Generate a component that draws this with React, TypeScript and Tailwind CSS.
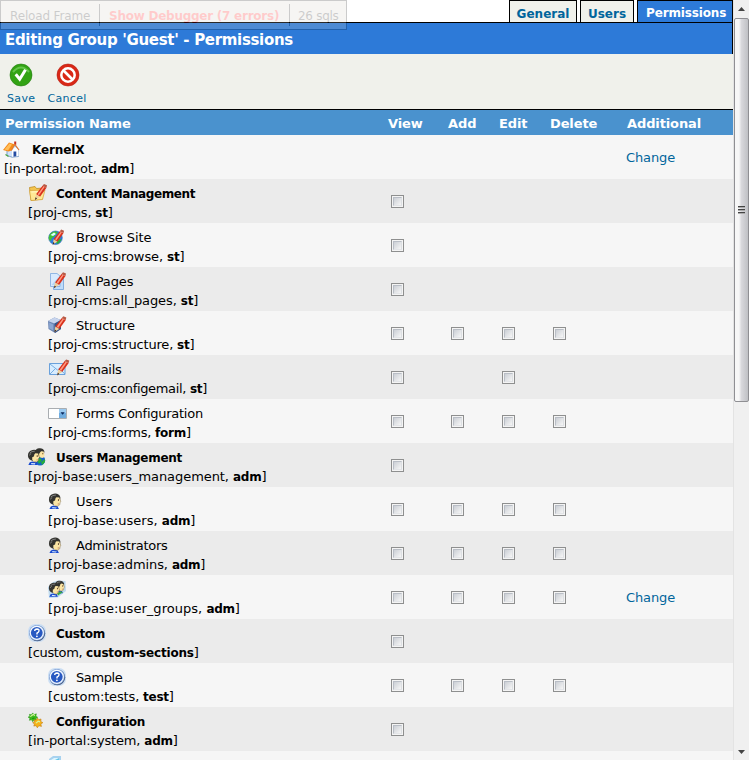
import type { ReactNode } from 'react';

type IconName =
  | 'home' | 'folder' | 'browse' | 'pages' | 'structure' | 'email' | 'form'
  | 'usersGlobe' | 'user' | 'group' | 'help' | 'gears' | 'settings';

function Pencil() {
  return (
    <g>
      <path d="M8 11 14.5 2.5 18.5 4.5 12 13.5Z" fill="#d9311c" />
      <path d="M9.6 11 15.6 3 16.8 3.6 10.8 12.4Z" fill="#ff9a80" />
      <path d="M14.5 2.5 16 .8 19 2 18.5 4.5Z" fill="#b85a45" />
      <path d="M8 11 12 13.5 7.2 16.5Z" fill="#efd09a" />
      <path d="M7.6 14 9 15.3 7 16.8Z" fill="#33211a" />
    </g>
  );
}

function Person() {
  return (
    <g>
      <path d="M1.5 17.5 3 14.8 6 13.8 10 14.5 11.5 17.5Z" fill="#1749d0" />
      <path d="M4.5 15.4 8 15.8 9 15 8.5 17 4.5 16.8Z" fill="#d8ecff" />
      <path d="M1 8Q.8 2.3 6 1.4 11.5.6 13 5L12.6 8 6.5 13.2Q1.4 12.4 1 8Z" fill="#33332f" />
      <path d="M5.6 9.4 7.4 8.4 8 6 9 5 12 5.4 12.6 7.6 13.2 9.8 12.4 10.4 12.2 12.8 10.2 14.4 7 14 5.6 12Z" fill="#fbe5a4" />
      <path d="M12.4 5.5 13 8 13.5 9.8 12.7 10.5 12.4 13 10.3 14.5 7 14.2" stroke="#7a6230" strokeWidth=".5" fill="none" />
      <path d="M3 4.8Q4.8 2.8 8.3 2.8M2.6 7.4Q3.1 5.8 4.5 5.2" stroke="#8f8f8f" strokeWidth=".9" fill="none" />
      <path d="M11 7.2v1.7" stroke="#4a2c1c" strokeWidth="1" />
      <path d="M10.2 12.2h1.5" stroke="#b5583c" strokeWidth=".7" />
    </g>
  );
}

function Icon({ name }: { name: IconName }) {
  const art: Record<IconName, ReactNode> = {
    home: (
      <g transform="translate(-1 0)">
        <path d="M4 9.5 10 4.5 15.5 9.5V16.5L9 17.2 4 15.5Z" fill="#cfe2fa" stroke="#6a90be" strokeWidth=".8" />
        <path d="M9 10 12.5 7 15.6 10V16L9 16.8Z" fill="#fff" />
        <path d="M10.5 11.5h2.8V16.3l-2.8.4Z" fill="#264da1" />
        <path d="M0 10 6 2.5 12 4.5 8.5 10.5 5.5 11.5Z" fill="#f58a18" />
        <path d="M1.5 9.5 6.5 3.6 9 4.5 5 10.5Z" fill="#ffbd59" />
        <path d="M8.3 10.5 11.8 4.3 16 10" stroke="#e27a33" strokeWidth="1.2" fill="none" />
        <path d="M11.2 1.5h2v3.5l-2-1.2Z" fill="#c7321c" />
        <path d="m2.5 14.5 3 2" stroke="#46a33b" strokeWidth="1.2" />
      </g>
    ),
    folder: (
      <g>
        <path d="M1.5 3.5 7 2.5 8.5 4.5 14.5 4V15L3 16.5Z" fill="#f5c64f" stroke="#b88216" strokeWidth=".7" />
        <path d="M1.5 6.5 17 6 14.5 15.5 3 16.5Z" fill="#ffe994" stroke="#d3a03a" strokeWidth=".7" />
        <path d="M3.5 8 13 7.6" stroke="#fff9cb" />
        <g transform="translate(0 -.8)"><Pencil /></g>
      </g>
    ),
    browse: (
      <g>
        <circle cx="7.5" cy="9.8" r="6.8" fill="#2b7bdd" stroke="#346bad" strokeWidth=".6" />
        <path d="M1 8Q3 3.5 8 3.2L10 5 7.8 6.3 7 8 4 10 2.5 13Q0 12 1 8Z" fill="#42bf36" />
        <path d="M9 12 12 11 13.5 12 10 16 8 15Z" fill="#2aaf39" />
        <path d="M2.5 7 6 4.5 8 6 5 8Z" fill="#dbffff" />
        <g transform="translate(-2 .8) scale(.95)"><Pencil /></g>
      </g>
    ),
    pages: (
      <g>
        <path d="M5.5 5.5h10v12h-10Z" fill="#bfdcfa" stroke="#6ea0d8" strokeWidth=".8" />
        <path d="M2.5 1.5H9L12 4v10.5H2.5Z" fill="#d8eafe" stroke="#7caae0" strokeWidth=".8" />
        <path d="m3.5 13 7-8v8Z" fill="#b5d5f6" />
        <g transform="translate(-1 -.5)"><Pencil /></g>
      </g>
    ),
    structure: (
      <g>
        <path d="M0 5 6.5 1.5 13 4V13L7 17 .5 13Z" fill="#6d87b4" />
        <path d="M0 5 6.5 1.5 13 4 6.5 7.5Z" fill="#c7d4ed" />
        <path d="M6.5 7.5 13 4V13L7 17Z" fill="#395487" />
        <path d="m1.2 6.5 4 2v6l-4-2.2Z" fill="#8ba7d3" />
        <g transform="translate(-.7 -.5)"><Pencil /></g>
      </g>
    ),
    email: (
      <g>
        <path d="M1.5 3.5h15.5v11H1.5Z" fill="#d8edff" stroke="#5c99d8" strokeWidth=".9" />
        <path d="m2 4 7.5 6L17 4M2 14l5.5-5.5M17 14l-5.5-5" stroke="#77aee1" fill="none" />
        <g transform="translate(2.2 -1.4)"><Pencil /></g>
      </g>
    ),
    form: (
      <g>
        <path d="M.5 4.5h18v10H.5Z" fill="#fff" stroke="#a9adb1" />
        <path d="M11 5h7v9h-7Z" fill="#70acdf" />
        <path d="M11 5h7v4h-7Z" fill="#9bcaf0" />
        <path d="m12.5 8.2h4.2L14.6 10.8Z" fill="#08275d" />
      </g>
    ),
    usersGlobe: (
      <g>
        <circle cx="12" cy="12.2" r="5.2" fill="#1462c7" />
        <path d="M9 12 12 10 14 12 11 16ZM13 14 17 11V14L14 17Z" fill="#25ad3d" />
        <g transform="translate(6 -.8) scale(.8)">
          <path d="M1 8Q.8 2.3 6 1.4 11.5.6 13 5L12.6 8 6.5 13.2Q1.4 12.4 1 8Z" fill="#33332f" />
          <path d="M5.6 9.4 8 6 9 5 12 5.4 13.2 9.8 12.2 12.8 10.2 13.6 5.6 12Z" fill="#fbe5a4" />
          <path d="M11 7.2v1.7" stroke="#4a2c1c" />
        </g>
        <g transform="translate(-1 .6) scale(.93)"><Person /></g>
      </g>
    ),
    user: <g transform="translate(0 .4) scale(.95)"><Person /></g>,
    group: (
      <g>
        <path d="M0 7 5 2 10 .5 17.5 1 18 11 10 17.5 1 18Z" fill="#c0dbef" />
        <g transform="translate(6 -.3) scale(.78)"><Person /></g>
        <path d="M9 13 12 11.5 15 12 10 15.5Z" fill="#38ad44" />
        <g transform="translate(0 1.6) scale(.86)"><Person /></g>
      </g>
    ),
    help: (
      <g>
        <rect x="0" y="0" width="18" height="18" rx="7" fill="#cbdef3" />
        <circle cx="9.3" cy="9.3" r="7.9" fill="#44597e" />
        <circle cx="8.8" cy="8.8" r="7.7" fill="#8eade0" />
        <circle cx="8.8" cy="8.8" r="7.1" fill="#f7fbff" />
        <circle cx="8.8" cy="8.8" r="5.9" fill="#2859c2" />
        <path d="M6.7 7Q6.8 5 9 5 11.2 5.1 11 7 10.8 8.2 9 9.2V10.4" fill="none" stroke="#fff" strokeWidth="1.4" />
        <circle cx="8.9" cy="12.3" r=".9" fill="#fff" />
      </g>
    ),
    gears: (
      <g transform="translate(0 -.5) scale(.93)">
        <path d="M0 6 2 5.5 1.5 3 3.8 3.5 5 1.5 6.5 3.3 9 2.5 8.5 5 10.5 6.2 8.6 7.5 9 10 6.5 9.2 5 11 4 9 1.5 9.5 2 7.2Z" fill="#3bbb1b" stroke="#239211" strokeWidth=".5" />
        <path d="M5 12 7 11.3 6.5 9 9 9.2 10 7 11.7 8.8 14 8 13.8 10.8 16 12 13.8 13.5 14.5 16 11.7 15.3 10 17.5 8.7 15.2 6.2 15.7 7 13.5Z" fill="#f5b31a" stroke="#c27a0c" strokeWidth=".6" />
        <path d="m2.5 5.5 3-2.2 2 1M8.5 12.5l2.5-2 2 .7" stroke="#d8f79e" strokeWidth="1.3" fill="none" />
        <path d="M4.5 7.5 7 7" stroke="#168a0d" strokeWidth="1.2" />
      </g>
    ),
    settings: (
      <g>
        <path d="M1 3 5 0h8v17H1Z" fill="#a8d2ef" />
        <path d="m3 4 3-2h5v11H3Z" fill="#dff6ff" />
        <path d="m5 5 6-3v10H5Z" fill="#65c5e8" />
      </g>
    ),
  };
  return (
    <svg viewBox="0 0 22 18" className="h-[18px] w-[22px] shrink-0 overflow-visible">
      {art[name]}
    </svg>
  );
}

interface Permission {
  level: 0 | 1 | 2;
  icon: IconName;
  name: string;
  path: string;
  module: string;
  boxes: string;
  change?: boolean;
  nameClass?: string;
  pathClass?: string;
}

const permissions: Permission[] = [
  { level: 0, icon: 'home', name: 'KernelX', path: 'in-portal:root', module: 'adm', boxes: '', change: true, nameClass: 'tracking-[-0.1px]', pathClass: 'tracking-[-0.1px]' },
  { level: 1, icon: 'folder', name: 'Content Management', path: 'proj-cms', module: 'st', boxes: 'v', nameClass: 'tracking-[-0.4px]', pathClass: 'tracking-[-0.2px]' },
  { level: 2, icon: 'browse', name: 'Browse Site', path: 'proj-cms:browse', module: 'st', boxes: 'v', nameClass: 'tracking-[-0.1px]', pathClass: 'tracking-[-0.08px]' },
  { level: 2, icon: 'pages', name: 'All Pages', path: 'proj-cms:all_pages', module: 'st', boxes: 'v', nameClass: 'tracking-[-0.13px]', pathClass: 'tracking-[-0.1px]' },
  { level: 2, icon: 'structure', name: 'Structure', path: 'proj-cms:structure', module: 'st', boxes: 'vaed', nameClass: 'tracking-[-0.2px]', pathClass: 'tracking-[-0.18px]' },
  { level: 2, icon: 'email', name: 'E-mails', path: 'proj-cms:configemail', module: 'st', boxes: 've', nameClass: 'tracking-[-0.3px]', pathClass: 'tracking-[-0.33px]' },
  { level: 2, icon: 'form', name: 'Forms Configuration', path: 'proj-cms:forms', module: 'form', boxes: 'vaed', nameClass: 'tracking-[-0.26px]', pathClass: 'tracking-[-0.23px]' },
  { level: 1, icon: 'usersGlobe', name: 'Users Management', path: 'proj-base:users_management', module: 'adm', boxes: 'v', nameClass: 'tracking-[-0.29px]', pathClass: 'tracking-[-0.07px]' },
  { level: 2, icon: 'user', name: 'Users', path: 'proj-base:users', module: 'adm', boxes: 'vaed', pathClass: 'tracking-[0.02px]' },
  { level: 2, icon: 'user', name: 'Administrators', path: 'proj-base:admins', module: 'adm', boxes: 'vaed', nameClass: 'tracking-[-0.28px]', pathClass: 'tracking-[-0.1px]' },
  { level: 2, icon: 'group', name: 'Groups', path: 'proj-base:user_groups', module: 'adm', boxes: 'vaed', change: true, nameClass: 'tracking-[-0.15px]', pathClass: 'tracking-[0.03px]' },
  { level: 1, icon: 'help', name: 'Custom', path: 'custom', module: 'custom-sections', boxes: 'v', nameClass: 'tracking-[-0.35px]', pathClass: 'tracking-[-0.35px]' },
  { level: 2, icon: 'help', name: 'Sample', path: 'custom:tests', module: 'test', boxes: 'vaed', nameClass: 'tracking-[-0.4px]', pathClass: 'tracking-[-0.15px]' },
  { level: 1, icon: 'gears', name: 'Configuration', path: 'in-portal:system', module: 'adm', boxes: 'v', nameClass: 'tracking-[-0.28px]', pathClass: 'tracking-[-0.17px]' },
  { level: 2, icon: 'settings', name: '', path: '', module: '', boxes: '' },
];

const indents = ['pl-[4px]', 'pl-[28px]', 'pl-[48px]'];
const columns = 'grid grid-cols-[388px_60px_51px_51px_76px_1fr]';

function CheckBox() {
  return (
    <span className="ml-[3px] flex size-[13px] items-center justify-center border border-[#8e8f8f] bg-[#f4f4f4]">
      <span className="size-[9px] border border-[#b9bec6] border-r-[#dde0e3] border-b-[#e3e5e8] bg-linear-to-br from-[#cbcfd5] to-[#f6f6f6]" />
    </span>
  );
}

function PermissionRow({ item }: { item: Permission }) {
  const heading = item.level < 2;
  return (
    <div className={`${columns} h-11 shrink-0 odd:bg-[#f6f6f6] even:bg-[#ebebeb]`}>
      <div className={`pt-[5px] leading-[19px] whitespace-nowrap ${indents[item.level]}`}>
        <div className={`flex h-[19px] gap-[6px] ${heading ? 'text-[12px] leading-[21px] font-bold' : ''}`}>
          <Icon name={item.icon} />
          <span className={item.nameClass}>{item.name}</span>
        </div>
        {item.path && (
          <div className="h-[19px]">
            <span className={item.pathClass}>[{item.path}, </span>
            <b className={`text-[12px] ${item.module.length > 4 ? 'tracking-[-0.18px]' : 'tracking-[-0.25px]'}`}>{item.module}</b>]
          </div>
        )}
      </div>
      {['v', 'a', 'e', 'd'].map((key) => (
        <div key={key} className="flex items-center pt-px">{item.boxes.includes(key) && <CheckBox />}</div>
      ))}
      <div className="flex items-center pt-[2px] tracking-[-0.1px] text-[#00659c]">{item.change && 'Change'}</div>
    </div>
  );
}

function Scrollbar() {
  return (
    <aside className="flex h-full w-4 flex-col items-center border-l border-[#e3e3e3] bg-[#f0f0f0]">
      <div className="flex h-[18px] items-center"><svg className="h-1 w-[7px]" viewBox="0 0 7 4"><path d="M0 4 3.5 0 7 4Z" fill="#444" /></svg></div>
      <div className="flex h-[384px] w-[15px] flex-col items-center justify-center gap-px rounded-[2px] border border-[#8f8f93] bg-linear-to-r from-[#f7f7f7] from-30% via-[#d8d8dc] to-[#bfc0c4]">
        {[0, 1, 2].map((n) => <i key={n} className="h-[2px] w-[7px] border-t border-[#444] bg-[#aaa]" />)}
      </div>
      <div className="mt-auto flex h-4 items-center"><svg className="h-1 w-[7px]" viewBox="0 0 7 4"><path d="M0 0h7L3.5 4Z" fill="#444" /></svg></div>
    </aside>
  );
}

export default function App() {
  return (
    <div className="relative flex h-[760px] w-[749px] overflow-hidden bg-white font-[Verdana,'DejaVu_Sans',sans-serif] text-[13px] text-black">
      <main className="flex h-full w-[733px] flex-col overflow-hidden">
        <nav className="flex h-[23px] shrink-0 justify-end gap-[3px] border-b border-black text-[12px] leading-[26px] font-bold text-[#00659c]">
          <span className="w-[68px] border border-b-0 border-black bg-[#f0f1eb] text-center">General</span>
          <span className="w-[54px] border border-b-0 border-black bg-[#f0f1eb] text-center">Users</span>
          <span className="w-24 border border-b-0 border-black bg-[#2d7ad8] pl-[8px] leading-[24px] tracking-[-0.15px] text-white">Permissions</span>
        </nav>
        <h1 className="h-[31px] shrink-0 border-r border-black bg-[#2d7ad8] pl-[5px] text-[15px] leading-[35px] font-bold tracking-[-0.32px] text-white">Editing Group 'Guest' - Permissions</h1>
        <section className="flex h-14 shrink-0 gap-[12px] border-b border-black bg-[#f0f1eb] pt-[9px] pl-[7px] text-[11px] tracking-[0.35px] text-[#00659c]">
          <div className="flex flex-col">
            <svg className="ml-[2px] size-6" viewBox="0 0 24 24"><circle cx="12" cy="12" r="11" fill="#32a314" stroke="#217c0f" strokeWidth=".6" /><path d="M4 9Q12 0 20 9" stroke="#65c64b" fill="none" strokeWidth="2" /><path d="m6.7 11.2 4 5L16.5 6.7" stroke="#fff" strokeWidth="3" fill="none" /></svg>
            <span className="mt-[4px] leading-4">Save</span>
          </div>
          <div className="flex flex-col">
            <svg className="ml-[9px] size-6" viewBox="0 0 24 24"><circle cx="12" cy="12" r="11" fill="#d92817" stroke="#b61e12" strokeWidth=".6" /><circle cx="12" cy="12" r="6.7" stroke="#fff" fill="none" strokeWidth="2.5" /><path d="m7.5 7.5 9 9" stroke="#fff" strokeWidth="2.7" /></svg>
            <span className="mt-[4px] leading-4">Cancel</span>
          </div>
        </section>
        <header className={`${columns} h-[25px] shrink-0 bg-[#4a92ce] text-[13px] leading-[28px] font-bold tracking-[-0.12px] text-white`}>
          <span className="pl-[5px]">Permission Name</span><span>View</span><span>Add</span><span>Edit</span><span>Delete</span><span className="pl-px">Additional</span>
        </header>
        <div className="flex flex-col">
          {permissions.map((item, index) => <PermissionRow key={index} item={item} />)}
        </div>
      </main>
      <Scrollbar />
      <div className="absolute top-0 left-0 flex h-[30px] w-[347px] items-center border border-black bg-[#d4d0c8] text-[12px] whitespace-nowrap opacity-20">
        <span className="w-[98px] pt-[2px] pl-[9px] tracking-[-0.15px]">Reload Frame</span>
        <b className="flex h-[22px] w-[191px] items-center border-x border-black pt-[2px] pl-[9px] tracking-[-0.25px] text-[#f00]">Show Debugger (7 errors)</b>
        <span className="pt-[2px] pl-2 tracking-[-0.3px]">26 sqls</span>
      </div>
    </div>
  );
}
